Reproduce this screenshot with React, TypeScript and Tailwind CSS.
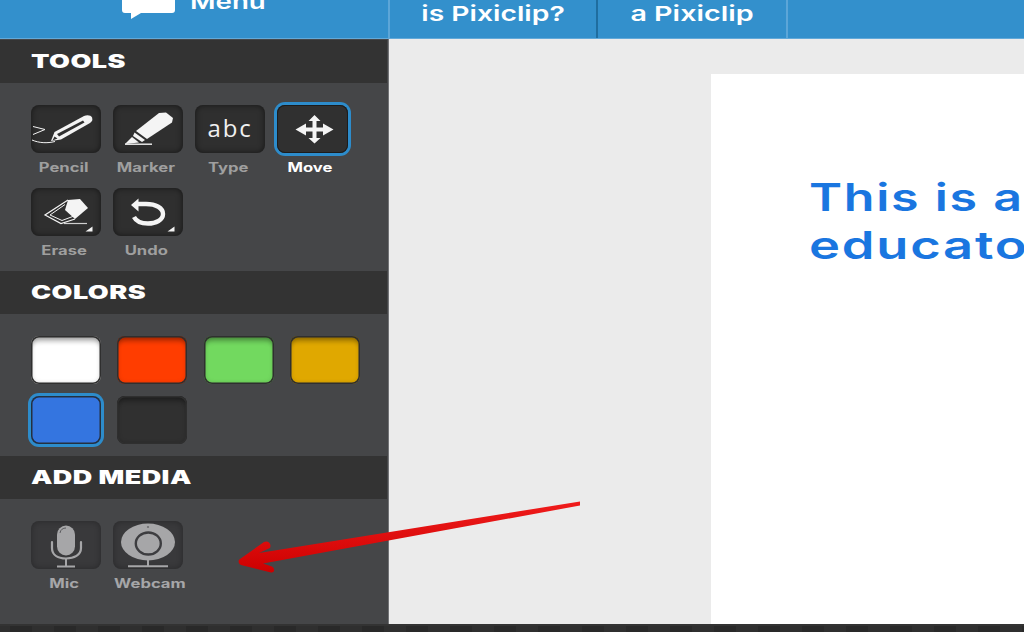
import React from "react";

const W = "#f4f4f4";

function Pencil() {
  return (
    <svg viewBox="0 0 70 48" className="h-12 w-[70px]">
      <path d="M2 21.5 L14 24.5 L2 29.5" fill="none" stroke={W} strokeWidth="1" />
      <path d="M1 35 C8 38 16 38.5 24 36.5" fill="none" stroke={W} strokeWidth="1" />
      <path d="M20 36 L23.5 27 L53 11 C56 9.5 60 10 61 12.5 C62 15 61 16.5 59 18 L30 34.5 Z" fill={W} />
      <path d="M26 29 L52 15.5 L53.5 17.5 L28 31.5 Z" fill="#2f2f2f" />
      <path d="M23.5 31.5 L26.5 33.5 L21.5 35.5 Z" fill="#2f2f2f" />
    </svg>
  );
}

function Marker() {
  return (
    <svg viewBox="0 0 70 48" className="h-12 w-[70px]">
      <path d="M46 8 L53 7.5 L60 13 L59 17.5 L34 34 L23 26 Z" fill={W} />
      <path d="M21.5 27.5 L32 35 L29 37 L20 31 Z" fill={W} />
      <path d="M19 32 L26 37.5 L12 39 Z" fill={W} />
      <path d="M12 39.2 H39" stroke={W} strokeWidth="1.4" />
    </svg>
  );
}

function MoveIcon() {
  return (
    <svg viewBox="0 0 70 48" className="h-12 w-[70px]">
      <path
        d="M37.5 10 L43.5 16 H39.5 V22.5 H46 V18.5 L56.5 24.5 L46 30.5 V26.5 H39.5 V33 H43.5 L37.5 38.5 L31.5 33 H35.5 V26.5 H29 V30.5 L18.5 24.5 L29 18.5 V22.5 H35.5 V16 H31.5 Z"
        fill={W}
      />
    </svg>
  );
}

function Eraser() {
  return (
    <svg viewBox="0 0 70 48" className="h-12 w-[70px]">
      <path d="M37 12 L14 27 L30 35.5 L44 31" fill="none" stroke={W} strokeWidth="1.2" />
      <path d="M34 16.5 L19 27 L31 32.5 L43 28" fill="none" stroke={W} strokeWidth="1" />
      <path d="M37 12 L49 11 L57 20 L44 31 L34 22 Z" fill={W} />
      <path d="M33 35.5 H56" stroke="#cfcfcf" strokeWidth="1.2" />
      <path d="M61.5 38.5 V43.5 H54.5 Z" fill={W} />
    </svg>
  );
}

function Undo() {
  return (
    <svg viewBox="0 0 70 48" className="h-12 w-[70px]">
      <path d="M24 16 H33 C43 16 50 20 50 26 C50 32 43 35.5 35 35.5 C28 35.5 23 33 21 29" fill="none" stroke={W} strokeWidth="4.4" />
      <path d="M18 17 L25.5 10.5 V23.5 Z" fill={W} />
      <path d="M61.5 38.5 V43.5 H54.5 Z" fill={W} />
    </svg>
  );
}

function Mic() {
  const c = "#a6a6a8";
  return (
    <svg viewBox="0 0 70 48" className="h-12 w-[70px]">
      <rect x="26" y="4.5" width="18" height="30" rx="9" fill={c} />
      <path d="M29 12 C29.5 8.5 32 7 35 7" fill="none" stroke="#46464a" strokeWidth="0.8" />
      <path d="M21 21 V27 C21 34 27 37.5 35 37.5 C43 37.5 50 34 50 27 V21" fill="none" stroke={c} strokeWidth="2.2" strokeLinecap="round" />
      <path d="M35 37 V45 M26 45.5 H44" stroke={c} strokeWidth="2" />
    </svg>
  );
}

function Webcam() {
  const c = "#a6a6a8";
  return (
    <svg viewBox="0 0 70 48" className="h-12 w-[70px]">
      <ellipse cx="35" cy="21" rx="27" ry="18.5" fill={c} />
      <circle cx="35" cy="6" r="1.1" fill="#6d6d70" />
      <ellipse cx="35.3" cy="22.5" rx="12.5" ry="11" fill={c} stroke="#3d3d40" strokeWidth="2.4" />
      <path d="M35 38 V45 M15 45.2 H55" stroke={c} strokeWidth="2" />
    </svg>
  );
}

function Band({ title }: { title: string }) {
  return (
    <div className="flex h-[43px] w-[387px] items-center bg-[#333333] pt-[2px] pl-[31px] text-[19px] font-black tracking-[0.3px] text-white">
      <span className="origin-left scale-x-[1.42]">{title}</span>
    </div>
  );
}

function Label({ text, className }: { text: string; className: string }) {
  return (
    <div className={"mt-[7px] h-[28px] text-center text-[12.5px] leading-[16px] font-bold whitespace-nowrap " + className}>
      <span className="inline-block scale-x-[1.33]">{text}</span>
    </div>
  );
}

function Tool({
  label,
  children,
  active,
}: {
  label: string;
  children: React.ReactNode;
  active?: boolean;
}) {
  return (
    <div className="flex w-[70px] flex-col">
      <div
        className={
          active
            ? "h-12 w-[71px] rounded-lg bg-[#303030] shadow-[inset_0_0_0_1px_#1c1c1c,0_0_0_3px_#2d8ccb]"
            : "h-12 w-[70px] rounded-lg bg-[#2f2f2f] shadow-[inset_0_0_6px_rgba(0,0,0,0.55)]"
        }
      >
        {children}
      </div>
      <Label text={label} className={active ? "pr-1 text-white" : "pr-1 text-[#9f9f9f]"} />
    </div>
  );
}

function Swatch({ color, active }: { color: string; active?: boolean }) {
  return (
    <div
      className={
        "h-12 w-[70px] rounded-lg " +
        color +
        (active
          ? " shadow-[inset_0_0_0_1.5px_#24303f,0_0_0_3px_#2d8ccb]"
          : " shadow-[inset_0_0_0_1.5px_#2f2f2f,inset_0_8px_5px_-3px_rgba(0,0,0,0.32),inset_0_0_5px_rgba(0,0,0,0.28)]")
      }
    />
  );
}

export default function App() {
  return (
    <div className="relative flex h-[632px] w-[1024px] flex-col overflow-hidden bg-[#ebebeb] font-['Inter','Liberation_Sans',sans-serif]">
      <header className="flex h-[39px] shrink-0 border-b border-[#62a9d9] bg-[#3390cc] text-[20.5px] leading-none font-semibold text-white">
        <div className="flex w-[388px] pl-[122px]">
          <svg viewBox="0 0 53 30" className="mt-[-11px] h-[30px] w-[53px] shrink-0">
            <path d="M3 0 H50 C52 0 53 1 53 3 V21 C53 23 52 24 50 24 H19 L9 30 V24 H3 C1 24 0 23 0 21 V3 C0 1 1 0 3 0 Z" fill="#ffffff" />
          </svg>
          <span className="mt-[-8px] ml-[15px] h-[21px] origin-left scale-x-[1.35]">Menu</span>
        </div>
        <div className="flex w-[210px] justify-center border-x-2 border-l-[#5ca6d8] border-r-[#1f6d9f] pt-[4px]">
          <span className="scale-x-[1.38]">is Pixiclip?</span>
        </div>
        <div className="flex w-[190px] justify-center border-r-2 border-r-[#5ca6d8] pt-[4px]">
          <span className="scale-x-[1.4]">a Pixiclip</span>
        </div>
      </header>

      <div className="flex min-h-0 flex-1">
        <aside className="w-[389px] shrink-0 border-r border-[#727376] bg-[#454648]">
          <div className="h-[1px]" />
          <Band title="TOOLS" />
          <div className="grid h-[188px] grid-cols-[repeat(4,70px)] content-start gap-x-3 pt-[22px] pl-[31px]">
            <Tool label="Pencil"><Pencil /></Tool>
            <Tool label="Marker"><Marker /></Tool>
            <Tool label="Type">
              <div className="flex h-12 items-center justify-center pb-[2px] font-['Open_Sans',sans-serif] text-[24px] font-medium tracking-[1.8px] text-[#f0f0f0]">abc</div>
            </Tool>
            <Tool label="Move" active><MoveIcon /></Tool>
            <Tool label="Erase"><Eraser /></Tool>
            <Tool label="Undo"><Undo /></Tool>
          </div>
          <Band title="COLORS" />
          <div className="grid h-[142px] grid-cols-[repeat(4,70px)] content-start gap-x-[16.3px] gap-y-3 pt-[22px] pl-[31px]">
            <Swatch color="bg-white" />
            <Swatch color="bg-[#ff3d00]" />
            <Swatch color="bg-[#72d95f]" />
            <Swatch color="bg-[#e0a800]" />
            <Swatch color="bg-[#3475e0]" active />
            <Swatch color="bg-[#303030]" />
          </div>
          <Band title="ADD MEDIA" />
          <div className="flex gap-x-3 pt-[22px] pl-[31px]">
            <div className="flex w-[70px] flex-col">
              <div className="h-12 rounded-lg bg-[#39393b] shadow-[inset_0_0_6px_rgba(0,0,0,0.3)]"><Mic /></div>
              <Label text="Mic" className="pr-1 text-[#a6a6a8]" />
            </div>
            <div className="flex w-[70px] flex-col">
              <div className="h-12 rounded-lg bg-[#39393b] shadow-[inset_0_0_6px_rgba(0,0,0,0.3)]"><Webcam /></div>
              <Label text="Webcam" className="pl-1 text-[#a6a6a8]" />
            </div>
          </div>
        </aside>
        <main className="min-w-0 flex-1 pt-[35px] pl-[322px]">
          <div className="h-full overflow-hidden bg-white pt-[99px] pl-[98px] text-[38px] leading-[48px] font-semibold tracking-[1.3px] whitespace-nowrap text-[#1a76e0]">
            <div className="origin-left scale-x-[1.32]">This is a</div>
            <div className="origin-left scale-x-[1.38]">educato</div>
          </div>
        </main>
      </div>

      <footer className="h-2 shrink-0 border-t-2 border-[#333333] bg-[repeating-linear-gradient(90deg,#2f2f2f_0,#2f2f2f_10px,#292929_10px,#292929_32px,#2f2f2f_32px,#2f2f2f_44px)]" />

      <svg viewBox="0 0 1024 632" className="pointer-events-none absolute inset-0 h-[632px] w-[1024px]">
        <defs>
          <linearGradient id="red" x1="0" y1="0" x2="0" y2="1">
            <stop offset="0" stopColor="#f01c1c" />
            <stop offset="1" stopColor="#cc0000" />
          </linearGradient>
        </defs>
        <path
          d="M580 501.5 L580 505.5 L263 563.5 L272 566.5 C275 568 275 573 271 572.5 L241 565 C238 564 238 560 240 559 L264 542 C268 540 272 544 270 548 L259 553 Z"
          fill="url(#red)"
        />
      </svg>
    </div>
  );
}
